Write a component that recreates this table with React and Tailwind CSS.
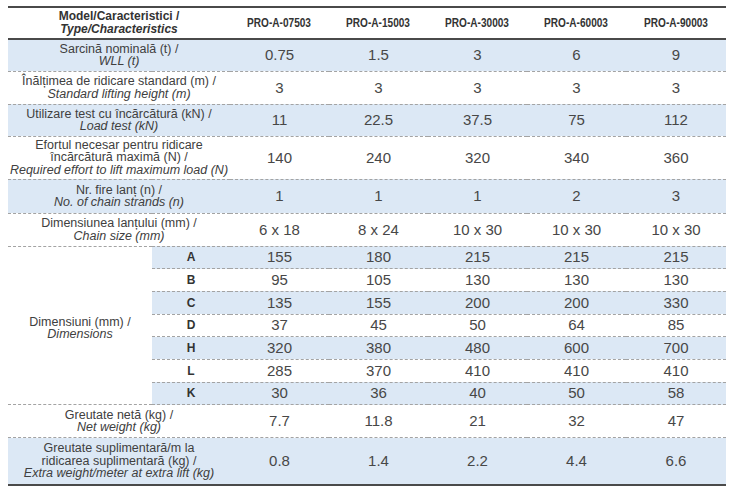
const models = ["PRO-A-07503", "PRO-A-15003", "PRO-A-30003", "PRO-A-60003", "PRO-A-90003"];

const topRows = [
  { ro: ["Sarcină nominală (t) /"], en: "WLL (t)", vals: ["0.75", "1.5", "3", "6", "9"], blue: true, h: "h-[32px]" },
  { ro: ["Înălțimea de ridicare standard (m) /"], en: "Standard lifting height (m)", vals: ["3", "3", "3", "3", "3"], h: "h-[33px]" },
  { ro: ["Utilizare test cu încărcătură (kN) /"], en: "Load test (kN)", vals: ["11", "22.5", "37.5", "75", "112"], blue: true, h: "h-[32px]" },
  { ro: ["Efortul necesar pentru ridicare", "încărcătură maximă (N) /"], en: "Required effort to lift maximum load (N)", vals: ["140", "240", "320", "340", "360"], h: "h-[43px]" },
  { ro: ["Nr. fire lanț (n) /"], en: "No. of chain strands (n)", vals: ["1", "1", "1", "2", "3"], blue: true, h: "h-[34px]" },
  { ro: ["Dimensiunea lanțului (mm) /"], en: "Chain size (mm)", vals: ["6 x 18", "8 x 24", "10 x 30", "10 x 30", "10 x 30"], h: "h-[33px]" },
];

const dims = [
  ["A", "155", "180", "215", "215", "215"],
  ["B", "95", "105", "130", "130", "130"],
  ["C", "135", "155", "200", "200", "330"],
  ["D", "37", "45", "50", "64", "85"],
  ["H", "320", "380", "480", "600", "700"],
  ["L", "285", "370", "410", "410", "410"],
  ["K", "30", "36", "40", "50", "58"],
];

const bottomRows = [
  { ro: ["Greutate netă (kg) /"], en: "Net weight (kg)", vals: ["7.7", "11.8", "21", "32", "47"], h: "h-[33px]" },
  { ro: ["Greutate suplimentară/m la", "ridicarea suplimentară (kg) /"], en: "Extra weight/meter at extra lift (kg)", vals: ["0.8", "1.4", "2.2", "4.4", "6.6"], blue: true, h: "h-[47px]" },
];

const dash = "border-b border-dashed border-[#a3a3a3]";

function Label({ ro, en }) {
  return (
    <div className="text-[12.5px] leading-[12.5px] text-[#404040] whitespace-nowrap">
      {ro.map((l) => (
        <div key={l}>{l}</div>
      ))}
      <div className="italic">{en}</div>
    </div>
  );
}

function DataRow({ row, last }) {
  return (
    <tr className={`${row.h} ${row.blue ? "bg-[#dce8f5]" : "bg-white"} ${last ? "" : dash}`}>
      <td colSpan={2} className="text-center align-middle p-0">
        <Label ro={row.ro} en={row.en} />
      </td>
      {row.vals.map((v, i) => (
        <td key={i} className="text-center align-middle p-0 text-[15px] leading-[16px] text-[#474747]">
          {v}
        </td>
      ))}
    </tr>
  );
}

export default function App() {
  return (
    <div className="w-[735px] h-[497px] bg-white pt-[6px] px-[8px]" style={{ fontFamily: '"Liberation Sans", Arial, sans-serif' }}>
      <table className="w-[718px] border-collapse table-fixed border-y-2 border-[#4a4a4a]">
        <colgroup>
          <col className="w-[144px]" />
          <col className="w-[78px]" />
          <col className="w-[99px]" />
          <col className="w-[99px]" />
          <col className="w-[99px]" />
          <col className="w-[99px]" />
          <col className="w-[100px]" />
        </colgroup>
        <tbody>
          <tr className="h-[32px] border-b-2 border-[#4a4a4a]">
            <td colSpan={2} className="text-center align-middle p-0 text-[12px] leading-[13px] font-bold text-[#333]">
              <div>Model/Caracteristici /</div>
              <div className="italic">Type/Characteristics</div>
            </td>
            {models.map((m) => (
              <td key={m} className="text-center align-middle p-0 text-[12px] font-bold text-[#333]">
                <span className="inline-block scale-x-[0.84]">{m}</span>
              </td>
            ))}
          </tr>
          {topRows.map((r, i) => (
            <DataRow key={i} row={r} />
          ))}
          {dims.map((d, i) => (
            <tr key={d[0]} className={`h-[22.7px] ${i < 6 ? dash : ""}`}>
              {i === 0 && (
                <td rowSpan={7} className={`bg-white text-center align-middle p-0 ${dash}`}>
                  <div className="text-[12.5px] leading-[12.5px] text-[#404040] pt-[6px]">
                    <div>Dimensiuni (mm) /</div>
                    <div className="italic">Dimensions</div>
                  </div>
                </td>
              )}
              <td className={`text-center align-middle p-0 text-[12px] leading-[14px] font-bold text-[#333] ${i % 2 === 0 ? "bg-[#dce8f5]" : "bg-white"} ${i === 6 ? dash : ""}`}>
                {d[0]}
              </td>
              {d.slice(1).map((v, j) => (
                <td key={j} className={`text-center align-middle p-0 text-[15px] leading-[16px] text-[#474747] ${i % 2 === 0 ? "bg-[#dce8f5]" : "bg-white"} ${i === 6 ? dash : ""}`}>
                  {v}
                </td>
              ))}
            </tr>
          ))}
          {bottomRows.map((r, i) => (
            <DataRow key={i} row={r} last={i === bottomRows.length - 1} />
          ))}
        </tbody>
      </table>
    </div>
  );
}
